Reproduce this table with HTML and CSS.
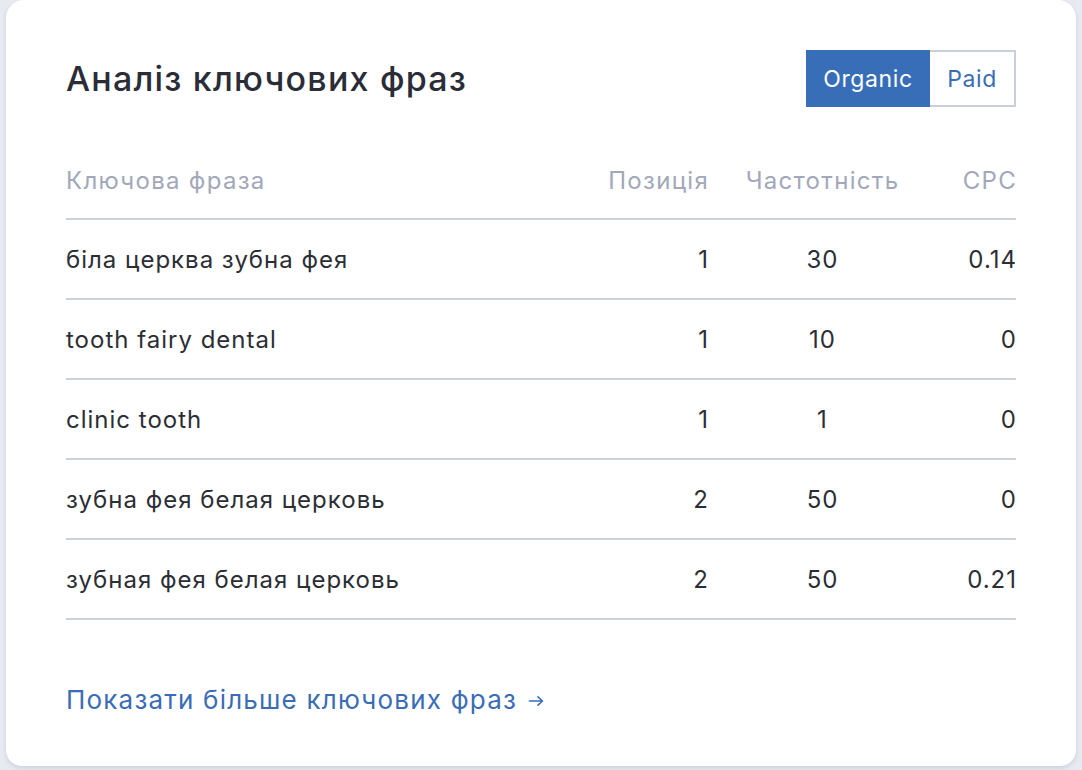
FILE: index.html
```html
<!DOCTYPE html>
<html lang="uk">
<head>
<meta charset="utf-8">
<title>Аналіз ключових фраз</title>
<link rel="stylesheet" href="styles.css">
</head>
<body>
<div class="page">
  <section class="card">
    <header class="card-head">
      <h2 class="title">Аналіз ключових фраз</h2>
      <div class="toggle">
        <button class="toggle-btn active">Organic</button>
        <button class="toggle-btn">Paid</button>
      </div>
    </header>
    <div class="table">
      <div class="row head">
        <div class="c-key">Ключова фраза</div>
        <div class="c-pos">Позиція</div>
        <div class="c-freq">Частотність</div>
        <div class="c-cpc">CPC</div>
      </div>
      <div class="row">
        <div class="c-key">біла церква зубна фея</div>
        <div class="c-pos">1</div>
        <div class="c-freq">30</div>
        <div class="c-cpc">0.14</div>
      </div>
      <div class="row">
        <div class="c-key">tooth fairy dental</div>
        <div class="c-pos">1</div>
        <div class="c-freq">10</div>
        <div class="c-cpc">0</div>
      </div>
      <div class="row">
        <div class="c-key">clinic tooth</div>
        <div class="c-pos">1</div>
        <div class="c-freq">1</div>
        <div class="c-cpc">0</div>
      </div>
      <div class="row">
        <div class="c-key">зубна фея белая церковь</div>
        <div class="c-pos">2</div>
        <div class="c-freq">50</div>
        <div class="c-cpc">0</div>
      </div>
      <div class="row">
        <div class="c-key">зубная фея белая церковь</div>
        <div class="c-pos">2</div>
        <div class="c-freq">50</div>
        <div class="c-cpc">0.21</div>
      </div>
    </div>
    <a class="more" href="#"><span>Показати більше ключових фраз</span><svg class="arrow" width="16" height="12" viewBox="0 0 16 12" fill="none" stroke="currentColor" stroke-width="1.6" stroke-linecap="round" stroke-linejoin="round"><path d="M1.5 6h13M10 1.8L14.5 6 10 10.2"/></svg></a>
  </section>
</div>
</body>
</html>
```
FILE: styles.css
```css
* { box-sizing: border-box; }
html, body { margin: 0; padding: 0; }
body {
  background: #e8eaf1;
  font-family: Inter, "Noto Sans", "Liberation Sans", sans-serif;
  color: #2c2e35;
}
.page {
  padding: 0 6px 4px 6px;
}
.card {
  background: #fff;
  border-radius: 18px 18px 16px 16px;
  height: 766px;
  padding: 50px 60px 0 60px;
  box-shadow: 0 2px 4px rgba(120, 130, 170, 0.25);
  display: flex;
  flex-direction: column;
}
.card-head {
  display: flex;
  align-items: center;
  justify-content: space-between;
  height: 57px;
}
.title {
  margin: 0;
  font-size: 34px;
  font-weight: 500;
  color: #2a2d37;
  letter-spacing: 1.2px;
}
.toggle {
  display: flex;
  height: 57px;
}
.toggle-btn {
  font-family: inherit;
  font-size: 23px;
  font-weight: 400;
  letter-spacing: 0.6px;
  background: #fff;
  color: #3a6db5;
  border: 2px solid #c9d0dc;
  border-left: none;
  padding: 0;
  width: 86px;
  height: 57px;
  cursor: pointer;
}
.toggle-btn.active {
  background: #376eb7;
  color: #fff;
  border: none;
  width: 124px;
}
.table {
  margin-top: 35px;
}
.row {
  display: grid;
  grid-template-columns: 1fr 130px 228px 80px;
  align-items: center;
  height: 80px;
  border-bottom: 2px solid #cbd1dc;
  font-size: 24px;
  letter-spacing: 1px;
  color: #2c2e35;
}
.row.head {
  height: 78px;
  color: #a2a8b9;
  letter-spacing: 1.3px;
}
.c-key { text-align: left; }
.c-pos { text-align: right; margin-right: -1px; }
.c-freq { text-align: center; margin-right: -1px; }
.c-cpc { text-align: right; margin-right: -1px; }
.more {
  margin-top: 64px;
  display: inline-flex;
  align-items: center;
  gap: 11px;
  align-self: flex-start;
  font-size: 26px;
  letter-spacing: 1.2px;
  color: #3a6db5;
  text-decoration: none;
}
.arrow { margin-top: 2px; }
```
